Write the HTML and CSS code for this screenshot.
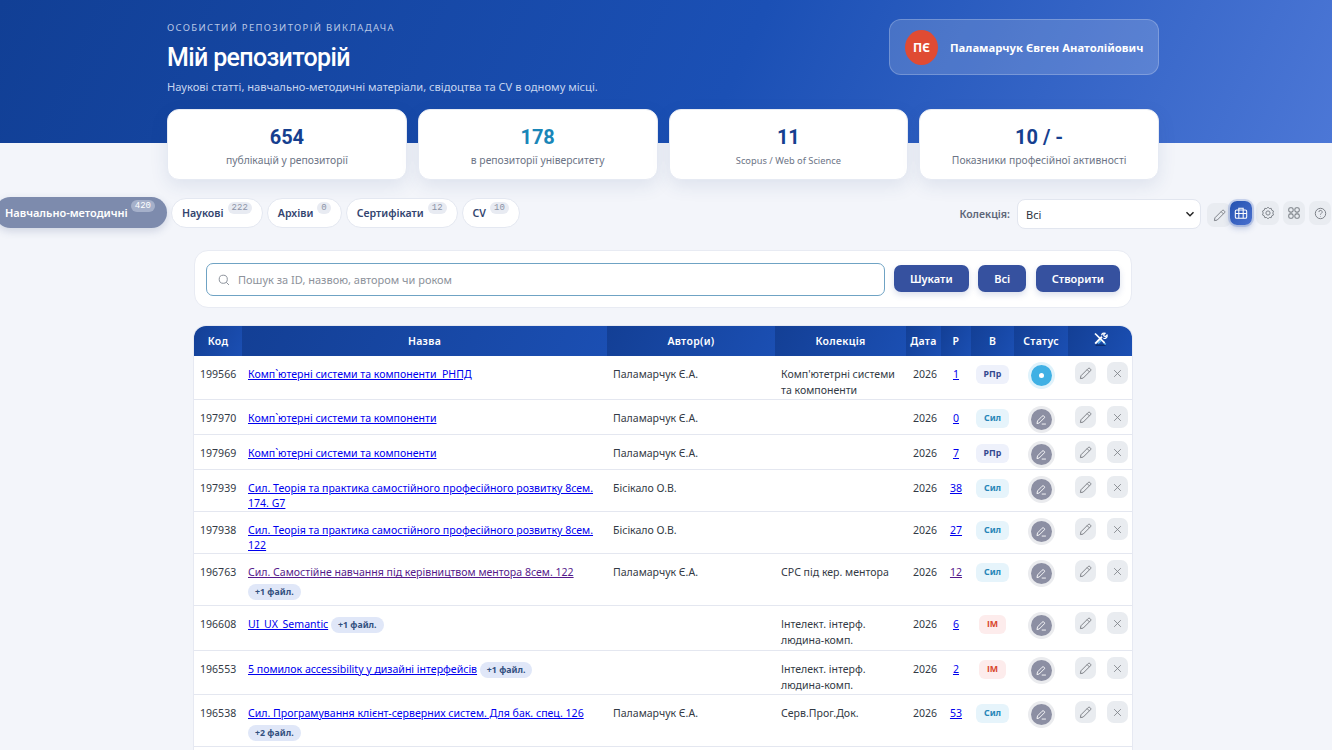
FILE: index.html
```html
<!DOCTYPE html>
<html lang="uk">
<head>
<meta charset="UTF-8">
<meta name="viewport" content="width=device-width, initial-scale=1.0">
<title>Мій репозиторій</title>
<link rel="stylesheet" href="styles.css">
</head>
<body>

<svg class="sprite" xmlns="http://www.w3.org/2000/svg">
  <symbol id="i-pencil" viewBox="0 0 16 16"><path d="M11.4 1.8a1.4 1.4 0 0 1 2 0l.8.8a1.4 1.4 0 0 1 0 2L5.2 13.6 1.7 14.3l.7-3.5zM10 3.2l2.8 2.8" fill="none" stroke="currentColor" stroke-width="1.2" stroke-linejoin="round"/></symbol>
  <symbol id="i-x" viewBox="0 0 16 16"><path d="M3.5 3.5l9 9M12.5 3.5l-9 9" fill="none" stroke="currentColor" stroke-width="1.2" stroke-linecap="round"/></symbol>
  <symbol id="i-status" viewBox="0 0 16 16"><path d="M9.8 2.6a1.3 1.3 0 0 1 1.9 0l.7.7a1.3 1.3 0 0 1 0 1.9L5.6 12l-3 .7.7-3zM9.5 13.4h4.5" fill="none" stroke="currentColor" stroke-width="1.2" stroke-linecap="round" stroke-linejoin="round"/></symbol>
</svg>

<header class="hero">
  <div class="hero-inner">
    <div>
      <div class="eyebrow">ОСОБИСТИЙ РЕПОЗИТОРІЙ ВИКЛАДАЧА</div>
      <h1>Мій репозиторій</h1>
      <p class="lead">Наукові статті, навчально-методичні матеріали, свідоцтва та CV в одному місці.</p>
    </div>
    <div class="user-card">
      <span class="avatar">ПЄ</span>
      <span class="user-name">Паламарчук Євген Анатолійович</span>
    </div>
  </div>
</header>

<div class="page">
  <section class="stats">
    <div class="stat"><b>654</b><span>публікацій у репозиторії</span></div>
    <div class="stat"><b class="teal">178</b><span>в репозиторії університету</span></div>
    <div class="stat"><b>11</b><span class="small">Scopus / Web of Science</span></div>
    <div class="stat"><b>10 / -</b><span>Показники професійної активності</span></div>
  </section>
</div>

<nav class="toolbar">
  <div class="tabs">
    <a class="tab active">Навчально-методичні<sup>420</sup></a>
    <a class="tab">Наукові<sup>222</sup></a>
    <a class="tab">Архіви<sup>0</sup></a>
    <a class="tab">Сертифікати<sup>12</sup></a>
    <a class="tab">CV<sup>10</sup></a>
  </div>
  <div class="tools">
    <label class="coll-label">Колекція:</label>
    <div class="coll-select">Всі
      <svg width="10" height="10" viewBox="0 0 10 10"><path d="M1.5 3.2L5 6.8l3.5-3.6" fill="none" stroke="#222" stroke-width="1.4"/></svg>
    </div>
    <div class="icon-row">
      <button class="tool-btn pencil"><svg width="13" height="13"><use href="#i-pencil"/></svg></button>
      <button class="tool-btn current">
        <svg width="14" height="14" viewBox="0 0 16 16" fill="none" stroke="currentColor" stroke-width="1.2"><rect x="1.5" y="4.5" width="13" height="9.5" rx="1.5"/><path d="M5.5 4.5V2.5h5v2M1.5 8.5h13M5.5 4.5V14M10.5 4.5V14"/></svg>
      </button>
      <button class="tool-btn gear"><svg width="14" height="14" viewBox="0 0 16 16" fill="none" stroke="currentColor" stroke-width="1.1"><circle cx="8" cy="8" r="2.4"/><path d="M8 1.3l1.5 1.6 2.2-.2.6 2.1 2 1-.8 2.2.8 2.2-2 1-.6 2.1-2.2-.2L8 14.7l-1.5-1.6-2.2.2-.6-2.1-2-1 .8-2.2-.8-2.2 2-1 .6-2.1 2.2.2z"/></svg></button>
      <button class="tool-btn"><svg width="14" height="14" viewBox="0 0 16 16" fill="none" stroke="currentColor" stroke-width="1.2"><rect x="2" y="2" width="5" height="5" rx="1.8"/><rect x="9" y="2" width="5" height="5" rx="1.8"/><rect x="2" y="9" width="5" height="5" rx="1.8"/><rect x="9" y="9" width="5" height="5" rx="1.8"/></svg></button>
      <button class="tool-btn"><svg width="13" height="13" viewBox="0 0 16 16" fill="none" stroke="currentColor" stroke-width="1.2"><circle cx="8" cy="8" r="6.4"/><path d="M6 6.2a2 2 0 1 1 3 1.7c-.7.4-1 .8-1 1.5M8 11.2v.6"/></svg></button>
    </div>
  </div>
</nav>

<div class="page">
  <section class="search-card">
    <div class="search-box">
      <svg width="12" height="12" viewBox="0 0 16 16" fill="none" stroke="#8a9099" stroke-width="1.3"><circle cx="7" cy="7" r="5.4"/><path d="M11 11l3.6 3.6"/></svg>
      <span>Пошук за ID, назвою, автором чи роком</span>
    </div>
    <button class="btn">Шукати</button>
    <button class="btn">Всі</button>
    <button class="btn">Створити</button>
  </section>

  <table class="repo">
    <colgroup>
      <col class="c-id"><col class="c-name"><col class="c-author"><col class="c-coll"><col class="c-date"><col class="c-r"><col class="c-v"><col class="c-status"><col class="c-act">
    </colgroup>
    <thead>
      <tr>
        <th>Код</th><th>Назва</th><th>Автор(и)</th><th>Колекція</th><th>Дата</th><th>Р</th><th>В</th><th>Статус</th>
        <th><svg class="wrench" width="15" height="14" viewBox="0 0 15 14" fill="none"><path d="M2.5 13.2h10" stroke="#0c2c6e" stroke-width="1.4"/><path d="M5 11.5l4-3.8M11 11l1.8 1.4" stroke="#5bb4ee" stroke-width="1.6"/><path d="M2 1.5l9.6 9.4" stroke="#fff" stroke-width="1.7"/><path d="M2.2 11.6L9 4.8" stroke="#fff" stroke-width="2"/><path d="M8.6 3.4a2.6 2.6 0 0 1 3.6-2.2L10.6 2.8l.5 1.3 1.3.5 1.6-1.6a2.6 2.6 0 0 1-3.6 3.2" stroke="#fff" stroke-width="1.2"/></svg></th>
      </tr>
    </thead>
    <tbody>
      <tr class="h44">
        <td>199566</td>
        <td class="title"><a href="#a">Комп`ютерні системи та компоненти&nbsp; РНПД</a></td>
        <td>Паламарчук Є.А.</td>
        <td>Комп'ютетрні системи та компоненти</td>
        <td class="date">2026</td><td class="ctr"><a href="#a">1</a></td>
        <td class="ctr"><span class="kind rpr">РПр</span></td>
        <td class="ctr"><span class="status on"><i></i></span></td>
        <td class="acts"><button class="act"><svg width="13" height="13"><use href="#i-pencil"/></svg></button><button class="act"><svg width="11" height="11"><use href="#i-x"/></svg></button></td>
      </tr>
      <tr class="h35">
        <td>197970</td>
        <td class="title"><a href="#a">Комп`ютерні системи та компоненти</a></td>
        <td>Паламарчук Є.А.</td><td></td>
        <td class="date">2026</td><td class="ctr"><a href="#a">0</a></td>
        <td class="ctr"><span class="kind sil">Сил</span></td>
        <td class="ctr"><span class="status"><svg width="12" height="12"><use href="#i-status"/></svg></span></td>
        <td class="acts"><button class="act"><svg width="13" height="13"><use href="#i-pencil"/></svg></button><button class="act"><svg width="11" height="11"><use href="#i-x"/></svg></button></td>
      </tr>
      <tr class="h35">
        <td>197969</td>
        <td class="title"><a href="#a">Комп`ютерні системи та компоненти</a></td>
        <td>Паламарчук Є.А.</td><td></td>
        <td class="date">2026</td><td class="ctr"><a href="#a">7</a></td>
        <td class="ctr"><span class="kind rpr">РПр</span></td>
        <td class="ctr"><span class="status"><svg width="12" height="12"><use href="#i-status"/></svg></span></td>
        <td class="acts"><button class="act"><svg width="13" height="13"><use href="#i-pencil"/></svg></button><button class="act"><svg width="11" height="11"><use href="#i-x"/></svg></button></td>
      </tr>
      <tr class="h42">
        <td>197939</td>
        <td class="title"><a href="#a">Сил. Теорія та практика самостійного професійного розвитку 8сем. 174. G7</a></td>
        <td>Бісікало О.В.</td><td></td>
        <td class="date">2026</td><td class="ctr"><a href="#a">38</a></td>
        <td class="ctr"><span class="kind sil">Сил</span></td>
        <td class="ctr"><span class="status"><svg width="12" height="12"><use href="#i-status"/></svg></span></td>
        <td class="acts"><button class="act"><svg width="13" height="13"><use href="#i-pencil"/></svg></button><button class="act"><svg width="11" height="11"><use href="#i-x"/></svg></button></td>
      </tr>
      <tr class="h42">
        <td>197938</td>
        <td class="title"><a href="#a">Сил. Теорія та практика самостійного професійного розвитку 8сем. 122</a></td>
        <td>Бісікало О.В.</td><td></td>
        <td class="date">2026</td><td class="ctr"><a href="#a">27</a></td>
        <td class="ctr"><span class="kind sil">Сил</span></td>
        <td class="ctr"><span class="status"><svg width="12" height="12"><use href="#i-status"/></svg></span></td>
        <td class="acts"><button class="act"><svg width="13" height="13"><use href="#i-pencil"/></svg></button><button class="act"><svg width="11" height="11"><use href="#i-x"/></svg></button></td>
      </tr>
      <tr class="h52">
        <td>196763</td>
        <td class="title"><a class="seen" href="#a">Сил. Самостійне навчання під керівництвом ментора 8сем. 122</a><div class="more-line"><span class="more">+1 файл.</span></div></td>
        <td>Паламарчук Є.А.</td><td>СРС під кер. ментора</td>
        <td class="date">2026</td><td class="ctr"><a class="seen" href="#a">12</a></td>
        <td class="ctr"><span class="kind sil">Сил</span></td>
        <td class="ctr"><span class="status"><svg width="12" height="12"><use href="#i-status"/></svg></span></td>
        <td class="acts"><button class="act"><svg width="13" height="13"><use href="#i-pencil"/></svg></button><button class="act"><svg width="11" height="11"><use href="#i-x"/></svg></button></td>
      </tr>
      <tr class="h45">
        <td>196608</td>
        <td class="title"><a href="#a">UI_UX_Semantic</a> <span class="more">+1 файл.</span></td>
        <td></td><td>Інтелект. інтерф. людина-комп.</td>
        <td class="date">2026</td><td class="ctr"><a href="#a">6</a></td>
        <td class="ctr"><span class="kind im">ІМ</span></td>
        <td class="ctr"><span class="status"><svg width="12" height="12"><use href="#i-status"/></svg></span></td>
        <td class="acts"><button class="act"><svg width="13" height="13"><use href="#i-pencil"/></svg></button><button class="act"><svg width="11" height="11"><use href="#i-x"/></svg></button></td>
      </tr>
      <tr class="h44">
        <td>196553</td>
        <td class="title"><a href="#a">5 помилок accessibility у дизайні інтерфейсів</a> <span class="more">+1 файл.</span></td>
        <td></td><td>Інтелект. інтерф. людина-комп.</td>
        <td class="date">2026</td><td class="ctr"><a href="#a">2</a></td>
        <td class="ctr"><span class="kind im">ІМ</span></td>
        <td class="ctr"><span class="status"><svg width="12" height="12"><use href="#i-status"/></svg></span></td>
        <td class="acts"><button class="act"><svg width="13" height="13"><use href="#i-pencil"/></svg></button><button class="act"><svg width="11" height="11"><use href="#i-x"/></svg></button></td>
      </tr>
      <tr class="h52">
        <td>196538</td>
        <td class="title"><a href="#a">Сил. Програмування клієнт-серверних систем. Для бак. спец. 126</a><div class="more-line"><span class="more">+2 файл.</span></div></td>
        <td>Паламарчук Є.А.</td><td>Серв.Прог.Док.</td>
        <td class="date">2026</td><td class="ctr"><a href="#a">53</a></td>
        <td class="ctr"><span class="kind sil">Сил</span></td>
        <td class="ctr"><span class="status"><svg width="12" height="12"><use href="#i-status"/></svg></span></td>
        <td class="acts"><button class="act"><svg width="13" height="13"><use href="#i-pencil"/></svg></button><button class="act"><svg width="11" height="11"><use href="#i-x"/></svg></button></td>
      </tr>
      <tr class="tail"><td colspan="9"></td></tr>
    </tbody>
  </table>
</div>

</body>
</html>
```

FILE: styles.css
```css
html, body {
  height: 750px;
  overflow: hidden;
}

body {
  margin: 0;
  background: #f3f5fa;
  color: #333a45;
  font-family: "Noto Sans", Arial, sans-serif;
  font-size: 11.5px;
}

.sprite { display: none; }

button {
  font-family: inherit;
  border: none;
  cursor: pointer;
}

.page { width: 1326px; }

/* hero */
.hero {
  height: 143px;
  box-sizing: border-box;
  padding-right: 6px;
  background: linear-gradient(115deg, #113f95 0%, #1b50b5 55%, #4c77d6 100%);
  color: #fff;
}

.hero-inner {
  width: 992px;
  margin: 0 auto;
  display: flex;
  justify-content: space-between;
  align-items: flex-start;
}

.eyebrow {
  padding-top: 21px;
  font-size: 9.5px;
  line-height: 13px;
  letter-spacing: 1.33px;
  color: #b9c8e6;
}

h1 {
  margin: 8px 0 0;
  font-family: Roboto, Arial, sans-serif;
  font-size: 25px;
  line-height: 32px;
  font-weight: 500;
  letter-spacing: -0.65px;
}

.lead {
  margin: 5px 0 0;
  font-size: 11.15px;
  line-height: 16px;
  color: #c7d5ef;
}

.user-card {
  margin-top: 19px;
  width: 270px;
  height: 56px;
  box-sizing: border-box;
  padding: 0 14px 0 15px;
  display: flex;
  align-items: center;
  gap: 12px;
  background: rgba(255, 255, 255, 0.16);
  border: 1px solid rgba(255, 255, 255, 0.22);
  border-radius: 12px;
}

.avatar {
  width: 33px;
  height: 35px;
  flex: none;
  border-radius: 50%;
  background: #e04b33;
  display: flex;
  align-items: center;
  justify-content: center;
  font-size: 12px;
  font-weight: 700;
}

.user-name {
  font-size: 11.3px;
  font-weight: 700;
  white-space: nowrap;
}

/* stat cards */
.stats {
  width: 992px;
  margin: -34px auto 0;
  display: grid;
  grid-template-columns: repeat(4, 1fr);
  gap: 11px;
}

.stat {
  height: 71px;
  box-sizing: border-box;
  background: #fff;
  border: 1px solid #e6eaf3;
  border-radius: 12px;
  box-shadow: 0 6px 18px rgba(40, 65, 130, 0.1);
  text-align: center;
  display: flex;
  flex-direction: column;
  padding-top: 15px;
}

.stat b {
  font-family: Roboto, Arial, sans-serif;
  font-size: 20px;
  line-height: 24px;
  font-weight: 700;
  color: #163f8f;
}

.stat b.teal { color: #1a86b8; }

.stat span {
  margin-top: 4px;
  font-size: 10.35px;
  line-height: 15px;
  color: #6c7486;
}

.stat span.small { font-size: 9.3px; }

/* tabs row */
.toolbar {
  margin-top: 17px;
  display: flex;
  justify-content: space-between;
  align-items: flex-start;
  padding-right: 1px;
}

.tabs {
  margin-left: -5px;
  display: flex;
  gap: 4px;
  align-items: center;
}

.tab {
  height: 30px;
  box-sizing: border-box;
  padding: 0 10px;
  display: flex;
  align-items: center;
  gap: 4px;
  background: #fff;
  border: 1px solid #e4e8f1;
  border-radius: 16px;
  font-size: 10.6px;
  font-weight: 600;
  color: #33456f;
}

.tab.active {
  height: 31px;
  padding-right: 12px;
  gap: 3px;
  border: none;
  background: #7d8bad;
  color: #fff;
  font-size: 11px;
  box-shadow: 0 3px 8px rgba(60, 80, 130, 0.2);
}

.tab sup {
  align-self: flex-start;
  margin-top: 3px;
  padding: 0 4px;
  height: 12px;
  min-width: 5px;
  border-radius: 8px;
  background: #e8ebf2;
  color: #8b93a6;
  font-family: "Liberation Mono", monospace;
  font-size: 9px;
  line-height: 13px;
  font-weight: 400;
}

.tab.active sup {
  background: #a5b0ca;
  color: #fff;
}

.tools {
  display: flex;
  align-items: flex-start;
  margin-top: 2px;
}

.coll-label {
  margin: 8px 7px 0 0;
  font-size: 10.5px;
  font-weight: 600;
  color: #5d6678;
}

.coll-select {
  width: 184px;
  height: 30px;
  box-sizing: border-box;
  padding: 0 5px 0 8px;
  display: flex;
  justify-content: space-between;
  align-items: center;
  background: #fff;
  border: 1px solid #e2e6ef;
  border-radius: 8px;
  font-size: 11px;
  color: #2c3340;
}

.icon-row {
  margin-left: 6px;
  display: flex;
  gap: 4px;
  align-items: flex-start;
  padding-top: 2px;
}

.tool-btn {
  width: 22px;
  height: 24px;
  padding: 0;
  border-radius: 7px;
  background: #e9ecf1;
  color: #7b8087;
  display: flex;
  align-items: center;
  justify-content: center;
}

.tool-btn.gear { width: 23px; }

.tool-btn.pencil {
  width: 24px;
  margin: 2px -5px 0 0;
}

.tool-btn.current {
  position: relative;
  color: #fff;
  background: linear-gradient(135deg, #2452b0, #4a70cf);
  box-shadow: 0 0 0 2px rgba(80, 115, 200, 0.25), 0 3px 6px rgba(50, 80, 160, 0.3);
}

/* search */
.search-card {
  width: 938px;
  height: 58px;
  box-sizing: border-box;
  margin: 21px auto 0;
  padding: 12px 11px;
  display: flex;
  gap: 9.5px;
  background: #fff;
  border: 1px solid #e8ebf3;
  border-radius: 14px;
}

.search-box {
  flex: 1;
  height: 33px;
  box-sizing: border-box;
  margin-right: -0.5px;
  padding-left: 11px;
  display: flex;
  align-items: center;
  gap: 8px;
  border: 1px solid #6fa3c4;
  border-radius: 7px;
  font-size: 11px;
  color: #8d929b;
}

.btn {
  height: 27px;
  margin-top: 2px;
  padding: 0 16px;
  background: #36519f;
  color: #fff;
  border-radius: 7px;
  font-size: 11px;
  font-weight: 600;
  box-shadow: 0 3px 6px rgba(50, 80, 150, 0.18);
}

/* table */
.repo {
  width: 938px;
  margin: 18px auto 0;
  table-layout: fixed;
  border-collapse: separate;
  border-spacing: 0;
  background: #fff;
  border-radius: 12px 12px 0 0;
  box-shadow: 0 0 0 1px #e6e9f2;
}

.c-id { width: 48px; }
.c-name { width: 365px; }
.c-author { width: 168px; }
.c-coll { width: 131px; }
.c-date { width: 35px; }
.c-r { width: 30px; }
.c-v { width: 43px; }
.c-status { width: 54px; }
.c-act { width: 64px; }

.repo th {
  height: 30px;
  padding: 0;
  background: linear-gradient(115deg, #133f95, #1b4fb3);
  color: #fff;
  font-size: 10.5px;
  font-weight: 600;
  letter-spacing: 0.3px;
  text-align: center;
}

.repo th:first-child { border-top-left-radius: 12px; }
.repo th:last-child { border-top-right-radius: 12px; }

.wrench { display: block; margin: -4px auto 0; }

.repo td {
  padding: 10px 6px 0;
  vertical-align: top;
  border-bottom: 1px solid #e4e7f0;
  font-size: 10.56px;
  line-height: 16px;
  color: #333a45;
}

.repo td.title {
  padding-top: 11px;
  line-height: 14.5px;
}

.repo td.date { padding-left: 7px; padding-right: 0; }

.repo a { color: #0000ee; }
.repo a.seen { color: #551a8b; }

.h35 { height: 35px; }
.h42 { height: 42px; }
.h52 { height: 52px; }
.h45 { height: 45px; }
.h44 { height: 44px; }

.repo .tail td {
  height: 3px;
  padding: 0;
  border: none;
}

.repo td.ctr { padding-left: 0; padding-right: 0; text-align: center; }

.more-line { margin-top: 4px; }

.more {
  display: inline-block;
  height: 16px;
  padding: 0 7px;
  border-radius: 8px;
  background: #e0e7f8;
  color: #33507f;
  font-size: 8.8px;
  line-height: 16px;
  font-weight: 700;
}

.kind {
  display: inline-block;
  height: 19px;
  padding: 0 8px;
  margin-top: -1px;
  border-radius: 6px;
  font-size: 8.8px;
  line-height: 19px;
  font-weight: 700;
  vertical-align: top;
}

.kind.rpr { background: #eef1fb; color: #34498f; }
.kind.sil { background: #e6f4fb; color: #2786b8; }
.kind.im { background: #fdecec; color: #d9482f; }

.status {
  width: 21px;
  height: 21px;
  margin-top: -1px;
  display: inline-flex;
  align-items: center;
  justify-content: center;
  vertical-align: top;
  border-radius: 50%;
  background: #8c8fa3;
  box-shadow: 0 0 0 3px #eaebee;
  color: #fff;
}

.status.on {
  background: #3fb0e4;
  box-shadow: 0 0 0 3px #dff2fb;
}

.status i {
  width: 5px;
  height: 5px;
  border-radius: 50%;
  background: #fff;
}

.repo td.acts { padding: 6px 4px 0 7px; white-space: nowrap; }

.act {
  width: 21px;
  height: 22px;
  padding: 0;
  margin-right: 11px;
  border-radius: 7px;
  background: #e9ecf0;
  color: #7c8086;
  display: inline-flex;
  align-items: center;
  justify-content: center;
  vertical-align: top;
}

.act:last-child { margin-right: 0; }
```
